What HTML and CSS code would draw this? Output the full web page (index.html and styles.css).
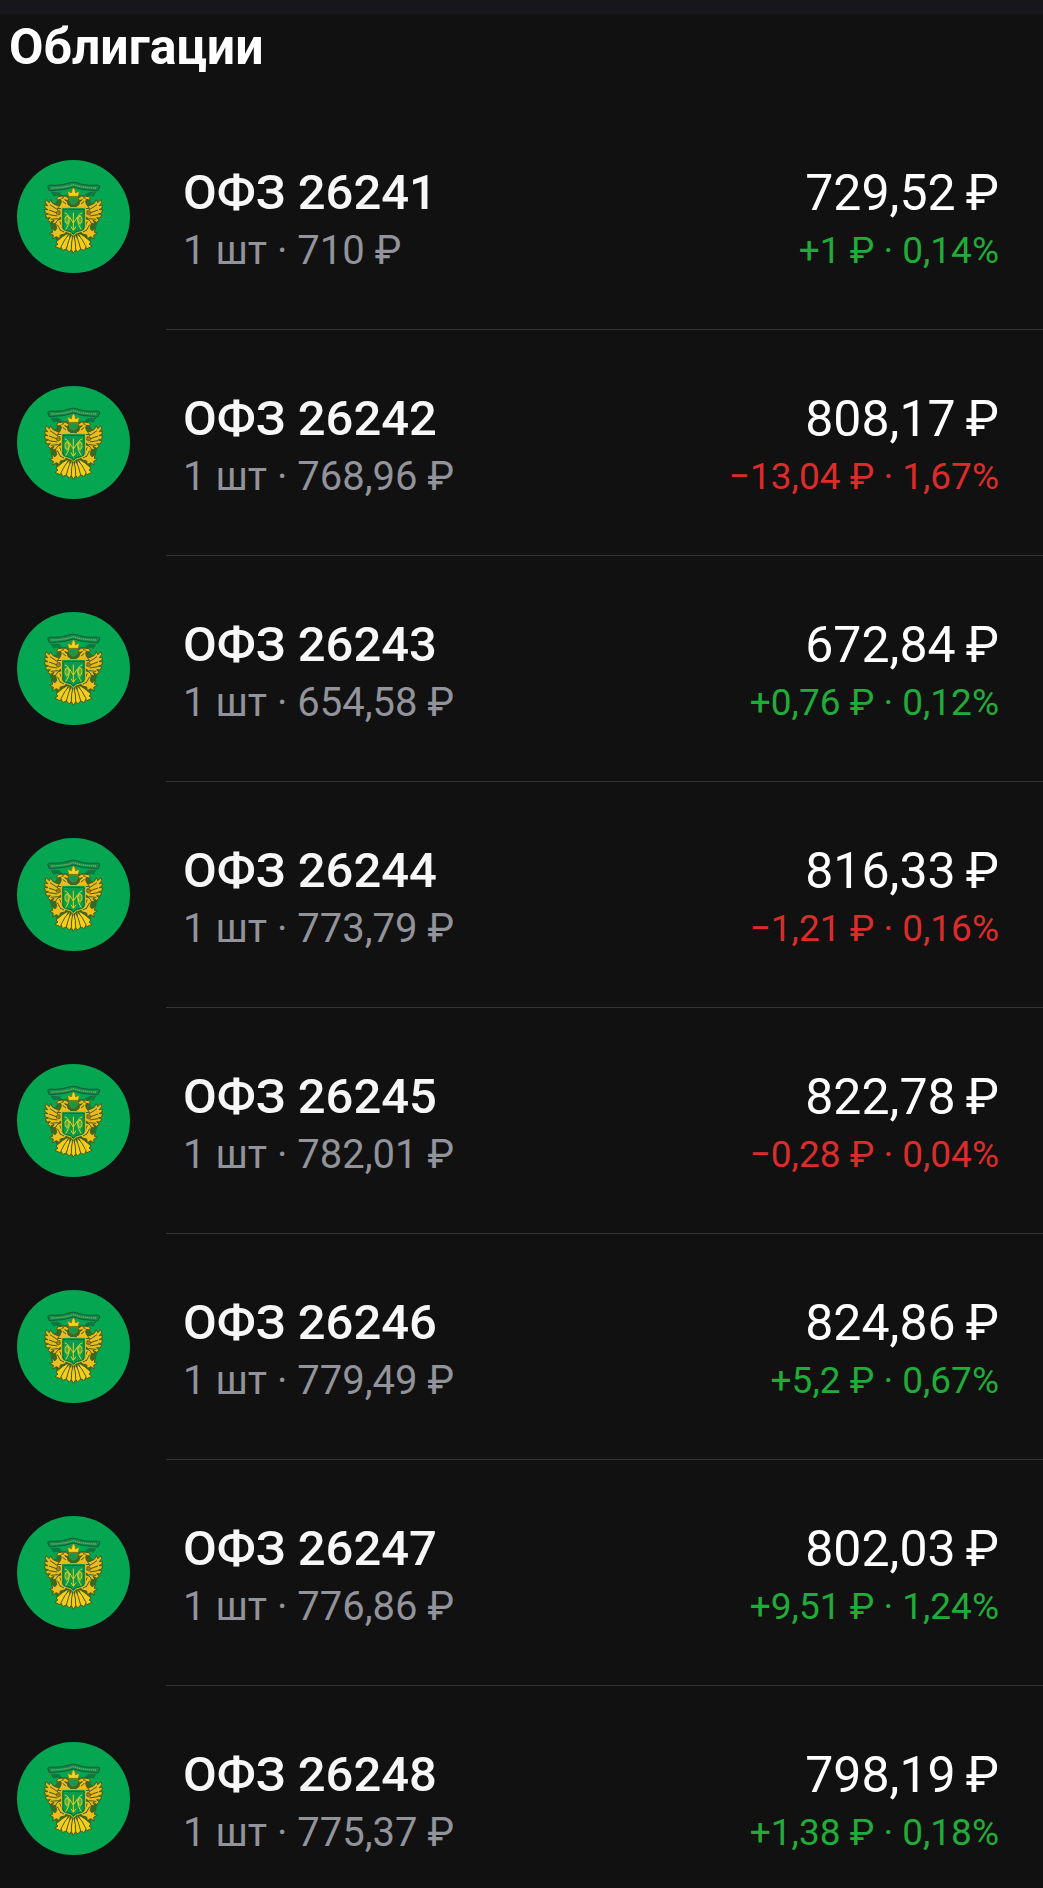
FILE: index.html
```html
<!DOCTYPE html>
<html lang="ru">
<head>
    <meta charset="UTF-8">
    <meta name="viewport" content="width=device-width, initial-scale=1">
    <title>Облигации</title>
    <link rel="stylesheet" href="styles.css">
</head>
<body>
<svg class="sprite" aria-hidden="true">
    <symbol id="emblem" viewBox="21 30 339 339">
        <!-- banner -->
        <path d="M113 108 Q122 103 132 106 Q160 106 176 99 Q190 94 204 99 Q220 106 249 106 Q260 103 270 108 L264 122 Q258 124 248 121 Q218 121 190 111 Q162 121 132 121 Q122 124 117 121 Z" fill="#14894a" stroke="#0a5f37" stroke-width="3"/>
        <path d="M124 114 Q160 114 190 104 Q220 114 258 114" fill="none" stroke="#6fb25c" stroke-width="4" stroke-dasharray="4 2"/>
        <path d="M122 125 L146 126 L156 134 L148 141 L139 137 L130 140 Z M259 125 L235 126 L225 134 L233 141 L242 137 L251 140 Z" fill="#077a41"/>
        <path d="M150 136 L231 136 L244 158 L262 168 L264 212 L256 240 L246 262 L232 294 L190 304 L149 294 L135 262 L125 240 L117 212 L119 168 L137 158 Z" fill="#316f28"/>
        <!-- wings, heads and legs -->
        <g id="wing" stroke="#4c5a18" stroke-width="3" stroke-linejoin="round">
            <path d="M140 166 L128 160 L122 149 L118 158 L108 149 L106 158 L113 167 L104 165 L105 174 L114 179 L103 179 L106 189 L116 192 L106 194 L110 204 L121 203 L113 211 L122 217 L132 210 L126 222 L138 220 L148 204 L158 199 L156 170 Z" fill="#e8bc1c"/>
            <path d="M144 180 L120 164 M142 189 L117 180 M142 198 L117 194 M144 206 L122 208" fill="none"/>
            <path d="M150 182 Q138 180 139 192 Q145 198 151 192 Z" fill="#a87822" stroke-width="2"/>
            <path d="M158 206 Q141 207 137 220 L140 236 L134 243 L125 233 L128 247 L119 250 L130 256 L128 267 L139 260 L149 266 L151 255 L164 252 L170 244 L158 236 Z" fill="#eac01c"/>
            <path d="M149 214 L156 230 M142 224 L152 242 M150 240 L162 246" fill="none"/>
            <path d="M151 164 Q156 154 152 148 Q145 151 139 146 Q145 137 154 139 Q168 135 177 145 L172 152 L164 149 Q176 155 174 164 L182 168 L182 174 L142 176 Z" fill="#e8bd1c"/>
            <path d="M154 145 L162 143 M158 154 L168 162" fill="none"/>
        </g>
        <use href="#wing" transform="matrix(-1 0 0 1 381 0)"/>
        <!-- crown -->
        <path d="M176 139 L173 123 L184 129 L187 117 L190 114 L194 117 L197 129 L208 123 L205 139 Z" fill="#f7d416" stroke="#83711c" stroke-width="2"/>
        <path d="M178 141 H203 V152 Q200 160 190 163 Q181 160 178 152 Z" fill="#16984a" stroke="#85821d" stroke-width="2"/>
        <!-- tail -->
        <g fill="#f4ce18" stroke="#4c5a18" stroke-width="3" stroke-linejoin="round">
            <g id="tail">
                <path d="M176 248 L157 260 L138 276 L144 282 L135 289 L150 296 L164 281 Z"/>
                <path d="M180 250 L165 268 L153 290 L158 302 L170 296 L179 275 Z"/>
                <path d="M185 252 L176 272 L169 297 L178 306 L186 296 L188 268 Z"/>
            </g>
            <use href="#tail" transform="matrix(-1 0 0 1 381 0)"/>
            <path d="M190 252 L185 276 L184 299 L190 310 L197 299 L196 276 Z"/>
        </g>
        <!-- shield -->
        <path d="M155 173 H226 V232 Q225 243 211 245 L199 249 L190 257 L182 249 L170 245 Q156 243 155 232 Z" fill="#079d4c" stroke="#e5b91a" stroke-width="3"/>
        <path d="M159 178 H222 V231 Q221 240 209 242 L197 245 L190 252 L184 245 L172 242 Q160 240 159 231 Z" fill="none" stroke="#08713b" stroke-width="3"/>
        <g fill="none" stroke="#e3cf28" stroke-width="3">
            <path d="M164 189 Q175 190 178 206 Q179 224 167 239 M217 189 Q206 190 203 206 Q202 224 214 239"/>
            <path d="M178 200 L190 219 L203 200"/>
            <path d="M190 188 V240 M183 230 L190 241 L198 230"/>
            <ellipse cx="171" cy="209" rx="6" ry="11"/>
            <ellipse cx="210" cy="209" rx="6" ry="11"/>
            <path d="M171 194 V226 M210 194 V226" stroke-width="2"/>
        </g>
    </symbol>
</svg>

<header class="topbar"></header>
<main>
    <h1 class="title">Облигации</h1>
    <ul class="bonds">
        <li class="bond">
            <svg class="logo" aria-hidden="true"><use href="#emblem"/></svg>
            <div class="info">
                <div class="left"><div class="name">ОФЗ 26241</div><div class="count">1 шт · 710 ₽</div></div>
                <div class="right"><div class="price">729,52&#8201;₽</div><div class="change up">+1 ₽ · 0,14%</div></div>
            </div>
        </li>
        <li class="bond">
            <svg class="logo" aria-hidden="true"><use href="#emblem"/></svg>
            <div class="info">
                <div class="left"><div class="name">ОФЗ 26242</div><div class="count">1 шт · 768,96 ₽</div></div>
                <div class="right"><div class="price">808,17&#8201;₽</div><div class="change down">−13,04 ₽ · 1,67%</div></div>
            </div>
        </li>
        <li class="bond">
            <svg class="logo" aria-hidden="true"><use href="#emblem"/></svg>
            <div class="info">
                <div class="left"><div class="name">ОФЗ 26243</div><div class="count">1 шт · 654,58 ₽</div></div>
                <div class="right"><div class="price">672,84&#8201;₽</div><div class="change up">+0,76 ₽ · 0,12%</div></div>
            </div>
        </li>
        <li class="bond">
            <svg class="logo" aria-hidden="true"><use href="#emblem"/></svg>
            <div class="info">
                <div class="left"><div class="name">ОФЗ 26244</div><div class="count">1 шт · 773,79 ₽</div></div>
                <div class="right"><div class="price">816,33&#8201;₽</div><div class="change down">−1,21 ₽ · 0,16%</div></div>
            </div>
        </li>
        <li class="bond">
            <svg class="logo" aria-hidden="true"><use href="#emblem"/></svg>
            <div class="info">
                <div class="left"><div class="name">ОФЗ 26245</div><div class="count">1 шт · 782,01 ₽</div></div>
                <div class="right"><div class="price">822,78&#8201;₽</div><div class="change down">−0,28 ₽ · 0,04%</div></div>
            </div>
        </li>
        <li class="bond">
            <svg class="logo" aria-hidden="true"><use href="#emblem"/></svg>
            <div class="info">
                <div class="left"><div class="name">ОФЗ 26246</div><div class="count">1 шт · 779,49 ₽</div></div>
                <div class="right"><div class="price">824,86&#8201;₽</div><div class="change up">+5,2 ₽ · 0,67%</div></div>
            </div>
        </li>
        <li class="bond">
            <svg class="logo" aria-hidden="true"><use href="#emblem"/></svg>
            <div class="info">
                <div class="left"><div class="name">ОФЗ 26247</div><div class="count">1 шт · 776,86 ₽</div></div>
                <div class="right"><div class="price">802,03&#8201;₽</div><div class="change up">+9,51 ₽ · 1,24%</div></div>
            </div>
        </li>
        <li class="bond">
            <svg class="logo" aria-hidden="true"><use href="#emblem"/></svg>
            <div class="info">
                <div class="left"><div class="name">ОФЗ 26248</div><div class="count">1 шт · 775,37 ₽</div></div>
                <div class="right"><div class="price">798,19&#8201;₽</div><div class="change up">+1,38 ₽ · 0,18%</div></div>
            </div>
        </li>
    </ul>
</main>
</body>
</html>
```
FILE: styles.css
```css
body {
    margin: 0;
    background-color: #111111;
    color: #ffffff;
    font-family: Roboto, "Noto Sans", sans-serif;
}
.sprite {
    position: absolute;
    width: 0;
    height: 0;
}
.topbar {
    height: 14px;
    background-color: #17171b;
}
.title {
    margin: 0;
    padding: 3px 9px 27px;
    font-size: 50px;
    line-height: 60px;
    font-weight: 700;
}
.bonds {
    margin: 0;
    padding: 0;
    list-style: none;
}
.bond {
    display: flex;
    align-items: flex-start;
    padding-left: 17px;
}
.logo {
    flex: none;
    width: 113px;
    height: 113px;
    margin: 56px 36px 0 0;
    border-radius: 50%;
    background-color: #05a652;
}
.info {
    flex: 1;
    display: flex;
    justify-content: space-between;
    padding: 56px 44px 53px 17px;
    border-bottom: 1px solid #333333;
    white-space: nowrap;
}
.bond:last-child .info {
    padding-bottom: 30px;
    border-bottom: none;
}
.right {
    text-align: right;
}
.name,
.price {
    line-height: 66px;
}
.name {
    color: #f7f7f8;
    font-size: 49px;
    font-weight: 500;
}
.price {
    font-size: 50px;
}
.count,
.change {
    line-height: 50px;
}
.count {
    color: #92939b;
    font-size: 40px;
}
.change {
    font-size: 37px;
}
.up {
    color: #20ac38;
}
.down {
    color: #dc2c2a;
}
```
